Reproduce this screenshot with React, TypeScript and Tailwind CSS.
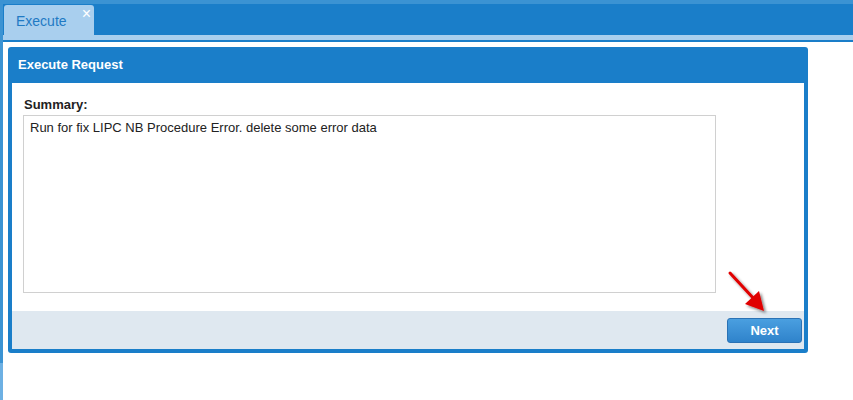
export default function App() {
  return (
    <div
      className="relative w-[853px] h-[400px] overflow-hidden bg-white flex flex-col"
      style={{ fontFamily: '"Liberation Sans", Arial, sans-serif' }}
    >
      {/* tab strip */}
      <div className="h-[4px] bg-[#3b93d3] shrink-0" />
      <div className="flex flex-1 min-h-0">
        <div className="w-[3px] shrink-0 flex flex-col">
          <div className="h-[359px] bg-[#3b93d3]" />
          <div className="flex-1 bg-[#6db0e3]" />
        </div>
        <div className="flex-1 flex flex-col">
          <div className="h-[31px] bg-[#1a7ec9] flex items-end pl-[1px]">
            <div className="relative w-[90px] h-[30px] bg-[#a9cfee] rounded-t-[3px] flex items-center pl-[12px] pt-[2px]">
              <span className="text-[14px] text-[#1f7ac4]">Execute</span>
              <span className="absolute right-[3px] top-[1px] text-[16px] leading-none text-white">×</span>
            </div>
          </div>
          <div className="h-[5px] bg-[#a9cfee]" />
          <div className="h-[2px] bg-[#1a7ec9]" />

          {/* panel */}
          <div className="pl-[5px] pt-[5px]">
            <div className="w-[800px] h-[306px] bg-[#1a7ec9] rounded-[3px] flex flex-col px-[4px] pb-[4px]">
              <div className="h-[36px] flex items-center pl-[6px] text-[13px] font-bold text-white">
                Execute Request
              </div>
              <div className="flex-1 bg-white flex flex-col">
                <div className="flex-1 pl-[11px] pt-[15px]">
                  <div className="text-[13px] font-bold text-[#222] leading-none mb-[4px] pl-[1px]">Summary:</div>
                  <div className="w-[693px] h-[178px] border border-[#d0d0d0] px-[6px] pt-[2px] text-[13px] text-[#222]">
                    Run for fix LIPC NB Procedure Error. delete some error data
                  </div>
                </div>
                <div className="h-[38px] bg-[#dfe8f0] flex items-center justify-end pr-[2px] pt-[1px]">
                  <button className="w-[75px] h-[25px] rounded-[3px] border border-[#2a72b5] bg-gradient-to-b from-[#4a9fe0] to-[#2f83cb] text-[13px] font-bold text-white">
                    Next
                  </button>
                </div>
              </div>
            </div>
          </div>
        </div>
      </div>

      {/* red arrow annotation */}
      <svg className="absolute left-[722px] top-[266px]" width="60" height="60" viewBox="0 0 60 60">
        <defs>
          <filter id="sh" x="-30%" y="-30%" width="160%" height="160%">
            <feGaussianBlur in="SourceAlpha" stdDeviation="1.5" />
            <feOffset dx="2" dy="2" />
            <feComponentTransfer>
              <feFuncA type="linear" slope="0.5" />
            </feComponentTransfer>
            <feMerge>
              <feMergeNode />
              <feMergeNode in="SourceGraphic" />
            </feMerge>
          </filter>
        </defs>
        <g filter="url(#sh)">
          <line x1="8" y1="7" x2="33" y2="34" stroke="#e00000" strokeWidth="3" strokeLinecap="round" />
          <polygon points="42,45 23,38 37,25" fill="#e00000" />
        </g>
      </svg>
    </div>
  )
}
